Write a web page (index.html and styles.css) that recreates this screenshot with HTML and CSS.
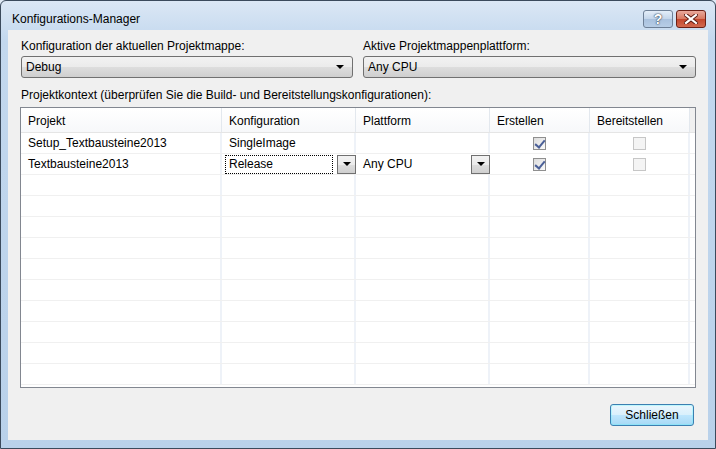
FILE: index.html
```html
<!DOCTYPE html>
<html lang="de">
<head>
  <meta charset="UTF-8" />
  <title>Konfigurations-Manager</title>
  <link rel="stylesheet" href="styles.css">
</head>
<body>
  <div class="window">
    <div class="titlebar">
      <span class="title">Konfigurations-Manager</span>
      <div class="caption-buttons">
        <span class="cap help">?</span>
        <span class="cap close">
          <svg width="14" height="10" viewBox="0 0 14 10">
            <path d="M2 1 L12 9 M12 1 L2 9" stroke="#5a1a12" stroke-width="4" stroke-linecap="square"/>
            <path d="M2 1 L12 9 M12 1 L2 9" stroke="#ffffff" stroke-width="2.2" stroke-linecap="square"/>
          </svg>
        </span>
      </div>
    </div>

    <div class="client">
      <div class="top-row">
        <div class="field left">
          <div class="label">Konfiguration der aktuellen Projektmappe:</div>
          <div class="combo"><span>Debug</span><span class="arrow"></span></div>
        </div>
        <div class="field right">
          <div class="label">Aktive Projektmappenplattform:</div>
          <div class="combo"><span>Any CPU</span><span class="arrow"></span></div>
        </div>
      </div>

      <div class="label ctx">Projektkontext (überprüfen Sie die Build- und Bereitstellungskonfigurationen):</div>

      <div class="grid">
        <div class="row head">
          <div class="cell">Projekt</div>
          <div class="cell">Konfiguration</div>
          <div class="cell">Plattform</div>
          <div class="cell">Erstellen</div>
          <div class="cell">Bereitstellen</div>
          <div class="cell filler"></div>
        </div>
        <div class="row">
          <div class="cell">Setup_Textbausteine2013</div>
          <div class="cell">SingleImage</div>
          <div class="cell"></div>
          <div class="cell center"><span class="check on"></span></div>
          <div class="cell center"><span class="check off"></span></div>
          <div class="cell filler"></div>
        </div>
        <div class="row">
          <div class="cell">Textbausteine2013</div>
          <div class="cell editor">
            <span class="focus">Release</span>
            <span class="drop"><span class="arrow"></span></span>
          </div>
          <div class="cell editor">
            <span class="plain">Any CPU</span>
            <span class="drop"><span class="arrow"></span></span>
          </div>
          <div class="cell center"><span class="check on"></span></div>
          <div class="cell center"><span class="check off"></span></div>
          <div class="cell filler"></div>
        </div>
        <div class="row"><div class="cell"></div><div class="cell"></div><div class="cell"></div><div class="cell"></div><div class="cell"></div><div class="cell filler"></div></div>
        <div class="row"><div class="cell"></div><div class="cell"></div><div class="cell"></div><div class="cell"></div><div class="cell"></div><div class="cell filler"></div></div>
        <div class="row"><div class="cell"></div><div class="cell"></div><div class="cell"></div><div class="cell"></div><div class="cell"></div><div class="cell filler"></div></div>
        <div class="row"><div class="cell"></div><div class="cell"></div><div class="cell"></div><div class="cell"></div><div class="cell"></div><div class="cell filler"></div></div>
        <div class="row"><div class="cell"></div><div class="cell"></div><div class="cell"></div><div class="cell"></div><div class="cell"></div><div class="cell filler"></div></div>
        <div class="row"><div class="cell"></div><div class="cell"></div><div class="cell"></div><div class="cell"></div><div class="cell"></div><div class="cell filler"></div></div>
        <div class="row"><div class="cell"></div><div class="cell"></div><div class="cell"></div><div class="cell"></div><div class="cell"></div><div class="cell filler"></div></div>
        <div class="row"><div class="cell"></div><div class="cell"></div><div class="cell"></div><div class="cell"></div><div class="cell"></div><div class="cell filler"></div></div>
        <div class="row"><div class="cell"></div><div class="cell"></div><div class="cell"></div><div class="cell"></div><div class="cell"></div><div class="cell filler"></div></div>
        <div class="row"><div class="cell"></div><div class="cell"></div><div class="cell"></div><div class="cell"></div><div class="cell"></div><div class="cell filler"></div></div>
      </div>

      <div class="footer">
        <button class="btn">Schließen</button>
      </div>
    </div>
  </div>
</body>
</html>
```

FILE: styles.css
```css
* {
  box-sizing: border-box;
}

body {
  margin: 0;
  font-family: "Liberation Sans", "Noto Sans", sans-serif;
  font-size: 12px;
  color: #000;
  background: #dfe9f5;
}

.window {
  width: 716px;
  height: 449px;
  border: 1px solid #3b4a5c;
  border-radius: 6px 6px 0 0;
  background: linear-gradient(#dbe7f5, #c3d8ee 40px, #b9d1ea);
  display: flex;
  flex-direction: column;
  overflow: hidden;
}

/* Titelleiste */
.titlebar {
  height: 29px;
  display: flex;
  align-items: flex-start;
  justify-content: space-between;
  padding: 0 9px 0 11px;
}

.title {
  margin-top: 10px;
  font-size: 12px;
  line-height: 16px;
}

.caption-buttons {
  display: flex;
  gap: 3px;
  margin-top: 9px;
}

.cap {
  width: 30px;
  height: 18px;
  border-radius: 3px;
  display: flex;
  align-items: center;
  justify-content: center;
}

.help {
  border: 1px solid #6d7f96;
  background: linear-gradient(#e4eef9, #c3d5ea 50%, #a9c1de 51%, #b7cde6);
  color: #fff;
  font-weight: bold;
  font-size: 14px;
  text-shadow: 0 0 2px #26374d, 0 0 1px #26374d;
}

.close {
  border: 1px solid #6b2016;
  background: linear-gradient(#e9a99c, #d7775f 50%, #c4462d 51%, #d26a50);
}

/* Client-Bereich */
.client {
  flex: 1;
  margin: 0 7px 8px 7px;
  background: #f0f0f0;
  padding: 8px 12px 0 13px;
  display: flex;
  flex-direction: column;
}

.label {
  line-height: 16px;
  white-space: nowrap;
}

.top-row {
  display: flex;
  gap: 10px;
}

.field.left {
  width: 332px;
}

.field.right {
  width: 333px;
}

.combo {
  margin-top: 2px;
  height: 22px;
  border: 1px solid #707070;
  border-radius: 3px;
  background: linear-gradient(#f2f2f2, #ebebeb 50%, #dddddd 51%, #cfcfcf);
  display: flex;
  align-items: center;
  justify-content: space-between;
  padding: 0 8px 0 4px;
}

.arrow {
  width: 0;
  height: 0;
  border-left: 4px solid transparent;
  border-right: 4px solid transparent;
  border-top: 4px solid #000;
}

.ctx {
  margin-top: 9px;
}

/* Projektliste */
.grid {
  margin-top: 4px;
  margin-left: -1px;
  width: 676px;
  height: 281px;
  border: 1px solid #828790;
  background: #fff;
  overflow: hidden;
}

.row {
  display: grid;
  grid-template-columns: 201px 134px 134px 100px 100px 1fr;
  height: 21px;
  border-bottom: 1px solid #f0f0f0;
}

.row.head {
  height: 25px;
  border-bottom: 1px solid #e5e5e5;
  background: linear-gradient(#ffffff, #f7f8fa);
}

.cell {
  display: flex;
  align-items: center;
  padding-left: 7px;
  border-right: 2px solid #eef2f8;
  white-space: nowrap;
  overflow: hidden;
}

.head .cell {
  border-right: 1px solid #e3e8ee;
  padding-top: 1px;
}

.cell.filler {
  border-right: none;
}

.head .cell.filler {
  background: #f0f0f0;
}

.cell.center {
  justify-content: center;
  padding-left: 0;
}

.cell.editor {
  padding-left: 3px;
  justify-content: space-between;
  border-right: none;
}

.focus {
  flex: 1;
  height: 19px;
  margin-right: 4px;
  border: 1px dotted #000;
  padding-left: 3px;
  display: flex;
  align-items: center;
}

.plain {
  flex: 1;
  padding-left: 4px;
}

.drop {
  width: 19px;
  height: 19px;
  border: 1px solid #707070;
  background: linear-gradient(#f2f2f2, #ebebeb 50%, #dddddd 51%, #cfcfcf);
  display: flex;
  align-items: center;
  justify-content: center;
  margin-right: 0;
}

.check {
  width: 13px;
  height: 13px;
  border: 1px solid #8f8f8f;
  background: linear-gradient(135deg, #dcdcdc, #fafafa);
  position: relative;
}

.check.on::after {
  content: "";
  position: absolute;
  left: 3px;
  top: 0;
  width: 4px;
  height: 8px;
  border-right: 2px solid #4a5f97;
  border-bottom: 2px solid #4a5f97;
  transform: rotate(40deg);
}

.check.off {
  border-color: #c6c6c6;
  background: #f4f4f4;
}

/* Fußzeile */
.footer {
  display: flex;
  justify-content: flex-end;
  margin-top: 16px;
  padding-right: 2px;
}

.btn {
  width: 84px;
  height: 22px;
  font-family: inherit;
  font-size: 12px;
  color: #000;
  border: 1px solid #3c7fb1;
  border-radius: 3px;
  background: linear-gradient(#eaf6fd, #d9f0fc 50%, #bee6fd 51%, #a7d9f5);
  box-shadow: inset 0 0 0 1px #48fdfe44;
  padding: 0;
}
```
